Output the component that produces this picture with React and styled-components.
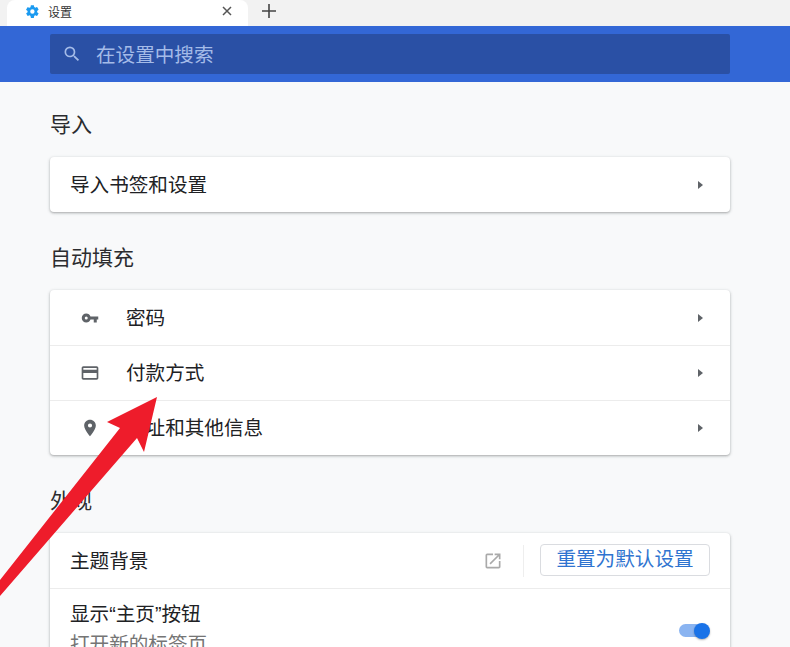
import React from "react";
import styled, { createGlobalStyle } from "styled-components";

const FONT = `"Liberation Sans", "Noto Sans CJK SC", sans-serif`;

const Global = createGlobalStyle`
  html, body {
    margin: 0;
    padding: 0;
    height: 647px;
    overflow: hidden;
    background: #f8f9fa;
    font-family: ${FONT};
    color: #202124;
  }
`;

const Page = styled.div`
  position: relative;
  width: 790px;
  height: 647px;
  overflow: hidden;
  background: #f8f9fa;
`;

const TabStrip = styled.div`
  display: flex;
  align-items: stretch;
  height: 26px;
  padding-left: 7px;
  background: #f2f2f2;
`;

const Tab = styled.div`
  display: flex;
  align-items: center;
  width: 241px;
  box-sizing: border-box;
  padding: 0 16px 4px 18px;
  background: #fff;
  border-radius: 8px 8px 0 0;
  font-size: 12px;
  color: #333;
`;

const TabTitle = styled.span`
  flex: 1;
  margin-left: 8px;
`;

const NewTab = styled.div`
  display: flex;
  align-items: center;
  margin-left: 14px;
  padding-bottom: 4px;
`;

const Header = styled.header`
  height: 56px;
  box-sizing: border-box;
  padding: 8px 60px 8px 50px;
  background: #3367d6;
`;

const SearchBox = styled.div`
  display: flex;
  align-items: center;
  height: 40px;
  box-sizing: border-box;
  padding-left: 12px;
  gap: 14px;
  border-radius: 2px;
  background: #2a50a5;
  font-size: 19.6px;
  color: #a4bbe8;
`;

const SearchText = styled.span`
  padding-bottom: 2px;
`;

const Content = styled.main`
  width: 680px;
  margin-left: 50px;
`;

const SectionTitle = styled.h2`
  margin: 0;
  height: 75px;
  box-sizing: border-box;
  padding-top: 28px;
  font-size: 21px;
  line-height: 30px;
  font-weight: 400;
  color: #2b2c2f;
`;

const Card = styled.section`
  background: #fff;
  border-radius: 4px;
  box-shadow: 0 1px 2px rgba(60, 64, 67, 0.3), 0 1px 3px 1px rgba(60, 64, 67, 0.12);
  margin-bottom: ${({ $gap }) => $gap || 0}px;
`;

const Row = styled.div`
  display: flex;
  align-items: center;
  height: ${({ $tall }) => ($tall ? "84px" : "55px")};
  box-sizing: border-box;
  padding: 0 27px 0 20px;
  font-size: 19.6px;
  & + & {
    border-top: 1px solid #ececec;
  }
`;

const RowIcon = styled.span`
  display: flex;
  justify-content: center;
  width: 40px;
  margin-right: 16px;
  color: #5f6368;
`;

const Label = styled.span`
  flex: 1;
  padding-bottom: 3px;
`;

const Stack = styled.div`
  flex: 1;
  align-self: flex-start;
  line-height: 27px;
  padding-top: 12px;
`;

const SubLabel = styled.div`
  margin-top: 3px;
  font-size: 19.6px;
  color: #757575;
  line-height: 27px;
`;

const Caret = styled.span`
  width: 0;
  height: 0;
  border-left: 5px solid #5f6368;
  border-top: 4.5px solid transparent;
  border-bottom: 4.5px solid transparent;
`;

const Divider = styled.span`
  width: 1px;
  height: 32px;
  margin: 0 16px 0 20px;
  background: #eeeeee;
`;

const OutlineButton = styled.button`
  width: 170px;
  height: 32px;
  padding: 0 0 2px;
  margin: 0 -7px 1px 0;
  background: #fff;
  border: 1px solid #dadce0;
  border-radius: 4px;
  font-family: ${FONT};
  font-size: 19.6px;
  line-height: 26px;
  color: #2f74d0;
`;

const Toggle = styled.span`
  position: relative;
  display: block;
  width: 28px;
  height: 13px;
  margin-right: -4px;
  border-radius: 7px;
  background: #8ab4f1;
`;

const Knob = styled.span`
  position: absolute;
  right: -3px;
  top: -1.5px;
  width: 16px;
  height: 16px;
  border-radius: 50%;
  background: #1a73e8;
  box-shadow: 0 1px 2px rgba(0, 0, 0, 0.3);
`;

// red annotation arrow drawn over the page
const ArrowOverlay = styled.svg`
  position: absolute;
  left: 0;
  top: 0;
  pointer-events: none;
`;

const GearIcon = () => (
  <svg width="15" height="15" viewBox="0 0 24 24" fill="#1a9af0">
    <path d="M19.4 13c.04-.32.06-.66.06-1s-.02-.68-.07-1l2.16-1.68a.5.5 0 0 0 .12-.64l-2.05-3.55a.5.5 0 0 0-.62-.22l-2.55 1.03a7.5 7.5 0 0 0-1.73-1l-.39-2.71A.5.5 0 0 0 13.83 2H9.74a.5.5 0 0 0-.5.43l-.39 2.71c-.62.26-1.2.6-1.73 1L4.57 5.11a.5.5 0 0 0-.62.22L1.9 8.88a.5.5 0 0 0 .12.64L4.18 11c-.05.32-.08.67-.08 1s.03.68.07 1l-2.16 1.68a.5.5 0 0 0-.12.64l2.05 3.55c.13.22.39.3.62.22l2.55-1.03c.53.4 1.11.74 1.73 1l.39 2.71c.04.24.25.43.5.43h4.09c.25 0 .46-.19.5-.43l.39-2.71c.62-.26 1.2-.6 1.73-1l2.55 1.03c.23.08.49 0 .62-.22l2.05-3.55a.5.5 0 0 0-.12-.64L19.4 13zM11.8 15.5a3.5 3.5 0 1 1 0-7 3.5 3.5 0 0 1 0 7z" />
  </svg>
);

const CloseIcon = () => (
  <svg width="10" height="10" viewBox="0 0 10 10" stroke="#555" strokeWidth="1.5">
    <path d="M1 1l8 8M9 1l-8 8" />
  </svg>
);

const PlusIcon = () => (
  <svg width="14" height="14" viewBox="0 0 14 14" stroke="#444" strokeWidth="1.6">
    <path d="M7 0v14M0 7h14" />
  </svg>
);

const SearchIcon = () => (
  <svg width="20" height="20" viewBox="0 0 24 24" fill="#a4bbe8">
    <path d="M15.5 14h-.79l-.28-.27A6.47 6.47 0 0 0 16 9.5 6.5 6.5 0 1 0 9.5 16c1.61 0 3.09-.59 4.23-1.57l.27.28v.79l5 4.99L20.49 19l-4.99-5zm-6 0C7.01 14 5 11.99 5 9.5S7.01 5 9.5 5 14 7.01 14 9.5 11.99 14 9.5 14z" />
  </svg>
);

const KeyIcon = () => (
  <svg width="18" height="18" viewBox="0 0 24 24" fill="currentColor">
    <path d="M12.65 10A6 6 0 0 0 7 6a6 6 0 0 0 0 12 6 6 0 0 0 5.65-4H17v4h4v-4h2v-4H12.65zM7 14a2 2 0 1 1 0-4 2 2 0 0 1 0 4z" />
  </svg>
);

const CardIcon = () => (
  <svg width="20" height="20" viewBox="0 0 24 24" fill="currentColor">
    <path d="M20 4H4c-1.11 0-2 .89-2 2v12c0 1.11.89 2 2 2h16c1.11 0 2-.89 2-2V6c0-1.11-.89-2-2-2zm0 14H4v-6h16v6zm0-10H4V6h16v2z" />
  </svg>
);

const PinIcon = () => (
  <svg width="20" height="20" viewBox="0 0 24 24" fill="currentColor">
    <path d="M12 2C8.13 2 5 5.13 5 9c0 5.25 7 13 7 13s7-7.75 7-13c0-3.87-3.13-7-7-7zm0 9.5a2.5 2.5 0 1 1 0-5 2.5 2.5 0 0 1 0 5z" />
  </svg>
);

const ExternalIcon = () => (
  <svg width="20" height="20" viewBox="0 0 24 24" fill="#aaaaaa">
    <path d="M19 19H5V5h7V3H5a2 2 0 0 0-2 2v14a2 2 0 0 0 2 2h14c1.1 0 2-.9 2-2v-7h-2v7zM14 3v2h3.59l-9.83 9.83 1.41 1.41L19 6.41V10h2V3h-7z" />
  </svg>
);

const links = [
  { icon: <KeyIcon />, label: "密码" },
  { icon: <CardIcon />, label: "付款方式" },
  { icon: <PinIcon />, label: "地址和其他信息" },
];

export default function App() {
  return (
    <Page>
      <Global />
      <TabStrip>
        <Tab>
          <GearIcon />
          <TabTitle>设置</TabTitle>
          <CloseIcon />
        </Tab>
        <NewTab>
          <PlusIcon />
        </NewTab>
      </TabStrip>
      <Header>
        <SearchBox>
          <SearchIcon />
          <SearchText>在设置中搜索</SearchText>
        </SearchBox>
      </Header>
      <Content>
        <SectionTitle>导入</SectionTitle>
        <Card $gap={3}>
          <Row>
            <Label>导入书签和设置</Label>
            <Caret />
          </Row>
        </Card>
        <SectionTitle>自动填充</SectionTitle>
        <Card $gap={3}>
          {links.map((item) => (
            <Row key={item.label}>
              <RowIcon>{item.icon}</RowIcon>
              <Label>{item.label}</Label>
              <Caret />
            </Row>
          ))}
        </Card>
        <SectionTitle>外观</SectionTitle>
        <Card>
          <Row>
            <Label>主题背景</Label>
            <ExternalIcon />
            <Divider />
            <OutlineButton>重置为默认设置</OutlineButton>
          </Row>
          <Row $tall>
            <Stack>
              显示“主页”按钮
              <SubLabel>打开新的标签页</SubLabel>
            </Stack>
            <Toggle>
              <Knob />
            </Toggle>
          </Row>
        </Card>
      </Content>
      <ArrowOverlay width="790" height="647" viewBox="0 0 790 647">
        <polygon fill="#ee1c2b" points="157,397 107,422 120,428 0,580 0,596 137,438 144,452" />
      </ArrowOverlay>
    </Page>
  );
}
